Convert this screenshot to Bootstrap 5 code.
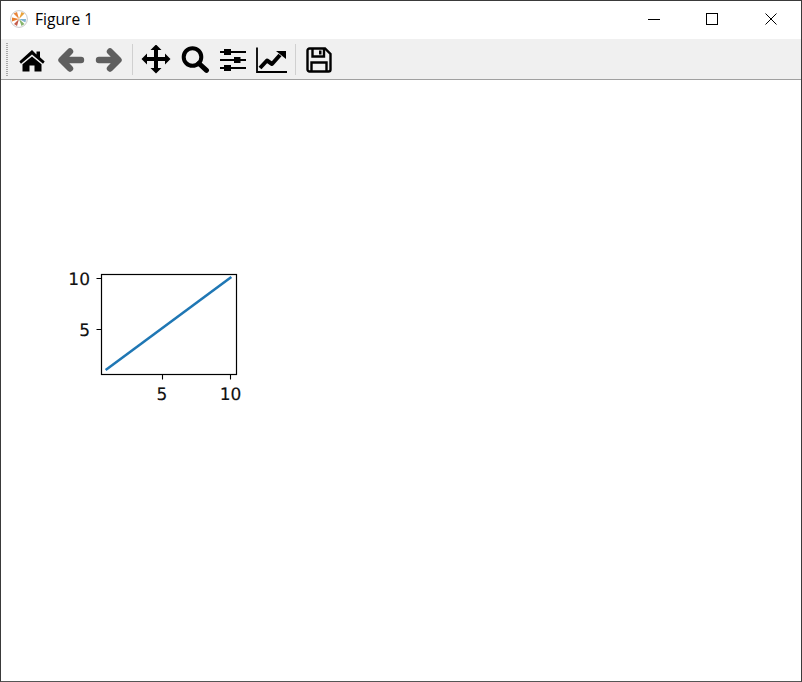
<!DOCTYPE html>
<html lang="en">
<head>
<meta charset="utf-8">
<title>Figure 1</title>
<link href="https://cdn.jsdelivr.net/npm/bootstrap@5.3.0/dist/css/bootstrap.min.css" rel="stylesheet">
<style>
html,body{margin:0;height:100%;background:#fff;overflow:hidden}
.win-frame{width:802px;height:682px;border:1px solid #3a3a3a;border-bottom-color:#555;background:#fff}
.win-title{height:38px;padding:0 0 3px 9px;font:15.6px "Open Sans","Noto Sans",sans-serif;color:#000;gap:7px}
.win-title svg{display:block}
.win-ctrls{margin-left:auto;padding-right:1px}
.win-ctl{width:58.500px;height:35px}
.tool-strip{height:41px;background:#f0f0f0;border-bottom:1px solid #a0a0a0;padding:2px 0 0 5px}
.grip{width:2px;height:33px;margin:-2px 5px 0 0;background-image:linear-gradient(#a8a8a8 50%,transparent 50%);background-size:2px 2px}
.tool-slot{width:38.400px;flex:none}
.tool-slot svg{display:block}
.tool-sep{width:1px;height:31px;margin:-2px 4px 0 4px;background:#d0d0d0;flex:none}
.fig-canvas{display:block}
.fig-canvas text{font-family:"DejaVu Sans",sans-serif;font-size:17px;fill:#111;text-rendering:geometricPrecision;stroke:#111;stroke-width:.15px}
</style>
</head>
<body>
<div class="win-frame d-flex flex-column">
  <div class="win-title d-flex align-items-center">
    <svg width="18" height="18" viewBox="0 0 18 18"><circle cx="9" cy="9" r="8.400" fill="#fff" stroke="#c9c9c9"/><path d="M9 9 3.500 3.500 7 2Z" fill="#e8853a"/><path d="M9 9 11.500 2 14.500 3.500Z" fill="#e9a23b"/><path d="M9 9 2 7.500 2 11.500Z" fill="#e87d2c"/><path d="M9 9 14.500 14 11.500 16Z" fill="#86b46c"/><path d="M9 9 16 9 15.500 12.500Z" fill="#7fb2cf"/><path d="M9 9 7 16 4 14Z" fill="#c45c4a"/></svg>
    <span>Figure 1</span>
    <div class="win-ctrls d-flex">
      <div class="win-ctl d-flex align-items-center justify-content-center"><svg width="12" height="12"><path d="M0 6.500H12" stroke="#000"/></svg></div>
      <div class="win-ctl d-flex align-items-center justify-content-center"><svg width="12" height="12"><rect x=".5" y=".5" width="11" height="11" fill="none" stroke="#000"/></svg></div>
      <div class="win-ctl d-flex align-items-center justify-content-center"><svg width="12" height="12"><path d="M.5.5 11.500 11.500M11.500.5 .5 11.500" stroke="#000"/></svg></div>
    </div>
  </div>
  <div class="tool-strip d-flex align-items-center">
    <div class="grip"></div>
    <div class="tool-slot d-flex justify-content-center"><svg width="26" height="26" viewBox="0 0 26 26"><path d="M13 3 .3 14.500l1.700 2.200L13 7.500l11 9.200 1.700-2.200-4.700-4.300V4.500h-3.500v3Z" fill="#000"/><path d="M13 9.500 3.500 17.300v7.200h7v-6h5v6h7v-7.200Z" fill="#000"/></svg></div>
    <div class="tool-slot d-flex justify-content-center"><svg width="28" height="26" viewBox="0 0 28 26"><path d="M13 4.500 4.500 13l8.500 8.500M6 13h18" fill="none" stroke="#5f5f5f" stroke-width="6.400" stroke-linecap="round" stroke-linejoin="round"/></svg></div>
    <div class="tool-slot d-flex justify-content-center"><svg width="28" height="26" viewBox="0 0 28 26"><path d="M15 4.500l8.500 8.500-8.500 8.500M22 13H4" fill="none" stroke="#5f5f5f" stroke-width="6.400" stroke-linecap="round" stroke-linejoin="round"/></svg></div>
    <div class="tool-sep"></div>
    <div class="tool-slot d-flex justify-content-center"><svg width="30" height="30" viewBox="0 1 30 30"><path d="M15 .5l5.500 5.500h-3.500v7h7v-3.500l5.500 5.500-5.500 5.500v-3.500h-7v7h3.500L15 29.500 9.500 24H13v-7H6v3.500L.5 15 6 9.500V13h7V6H9.500Z" fill="#000"/></svg></div>
    <div class="tool-slot d-flex justify-content-center"><svg width="30" height="30" viewBox="0 0 30 30"><circle cx="12.500" cy="12" r="8.800" fill="none" stroke="#000" stroke-width="4"/><path d="M19 18.500l7.500 6.800" stroke="#000" stroke-width="5" stroke-linecap="round"/></svg></div>
    <div class="tool-slot d-flex justify-content-center"><svg width="28" height="26" viewBox="0 0 28 26"><path d="M1 5h26M1 13h26M1 21h26" stroke="#000" stroke-width="1.800"/><rect x="5" y="2" width="7" height="6" fill="#000"/><rect x="15" y="10" width="6.500" height="6" fill="#000"/><rect x="5" y="18" width="7" height="6" fill="#000"/></svg></div>
    <div class="tool-slot d-flex justify-content-center"><svg width="32" height="28" viewBox="0 0 32 28"><path d="M1 1.500v24.500H31" fill="none" stroke="#000" stroke-width="1.800"/><path d="M4 22l7-7.500 5 3.500 8-9" fill="none" stroke="#000" stroke-width="4" stroke-linejoin="round"/><path d="M20 5h10v8Z" fill="#000"/></svg></div>
    <div class="tool-sep"></div>
    <div class="tool-slot d-flex justify-content-center"><svg width="28" height="28" viewBox="0 0 28 28"><path d="M2.500 4.500a2 2 0 0 1 2-2H20l5.500 5.500v15.500a2 2 0 0 1-2 2h-19a2 2 0 0 1-2-2Z" fill="none" stroke="#000" stroke-width="2.400"/><path d="M7.500 3v7.500h11.500V3" fill="none" stroke="#000" stroke-width="2.400"/><rect x="14" y="4.500" width="2.500" height="4" fill="#000"/><path d="M6.500 25v-8.500h15V25" fill="none" stroke="#000" stroke-width="2.400"/></svg></div>
  </div>
  <svg class="fig-canvas" width="800" height="601" viewBox="1 80 800 601">
    <path d="M106.700 369.300 230.300 277.800" fill="none" stroke="#1f77b4" stroke-width="2.600" stroke-linecap="square"/>
    <rect x="101.500" y="274.500" width="135" height="100" fill="none" stroke="#000" stroke-width="1.200"/>
    <path d="M96.500 278.500h5M96.500 329.500h5M162.500 374.500v5M230.500 374.500v5" stroke="#000" stroke-width="1.100"/>
    <text x="90" y="285" text-anchor="end">10</text>
    <text x="90" y="336" text-anchor="end">5</text>
    <text x="162" y="400" text-anchor="middle">5</text>
    <text x="230.500" y="400" text-anchor="middle">10</text>
  </svg>
</div>
<script src="https://cdn.jsdelivr.net/npm/bootstrap@5.3.0/dist/js/bootstrap.bundle.min.js"></script>
</body>
</html>
